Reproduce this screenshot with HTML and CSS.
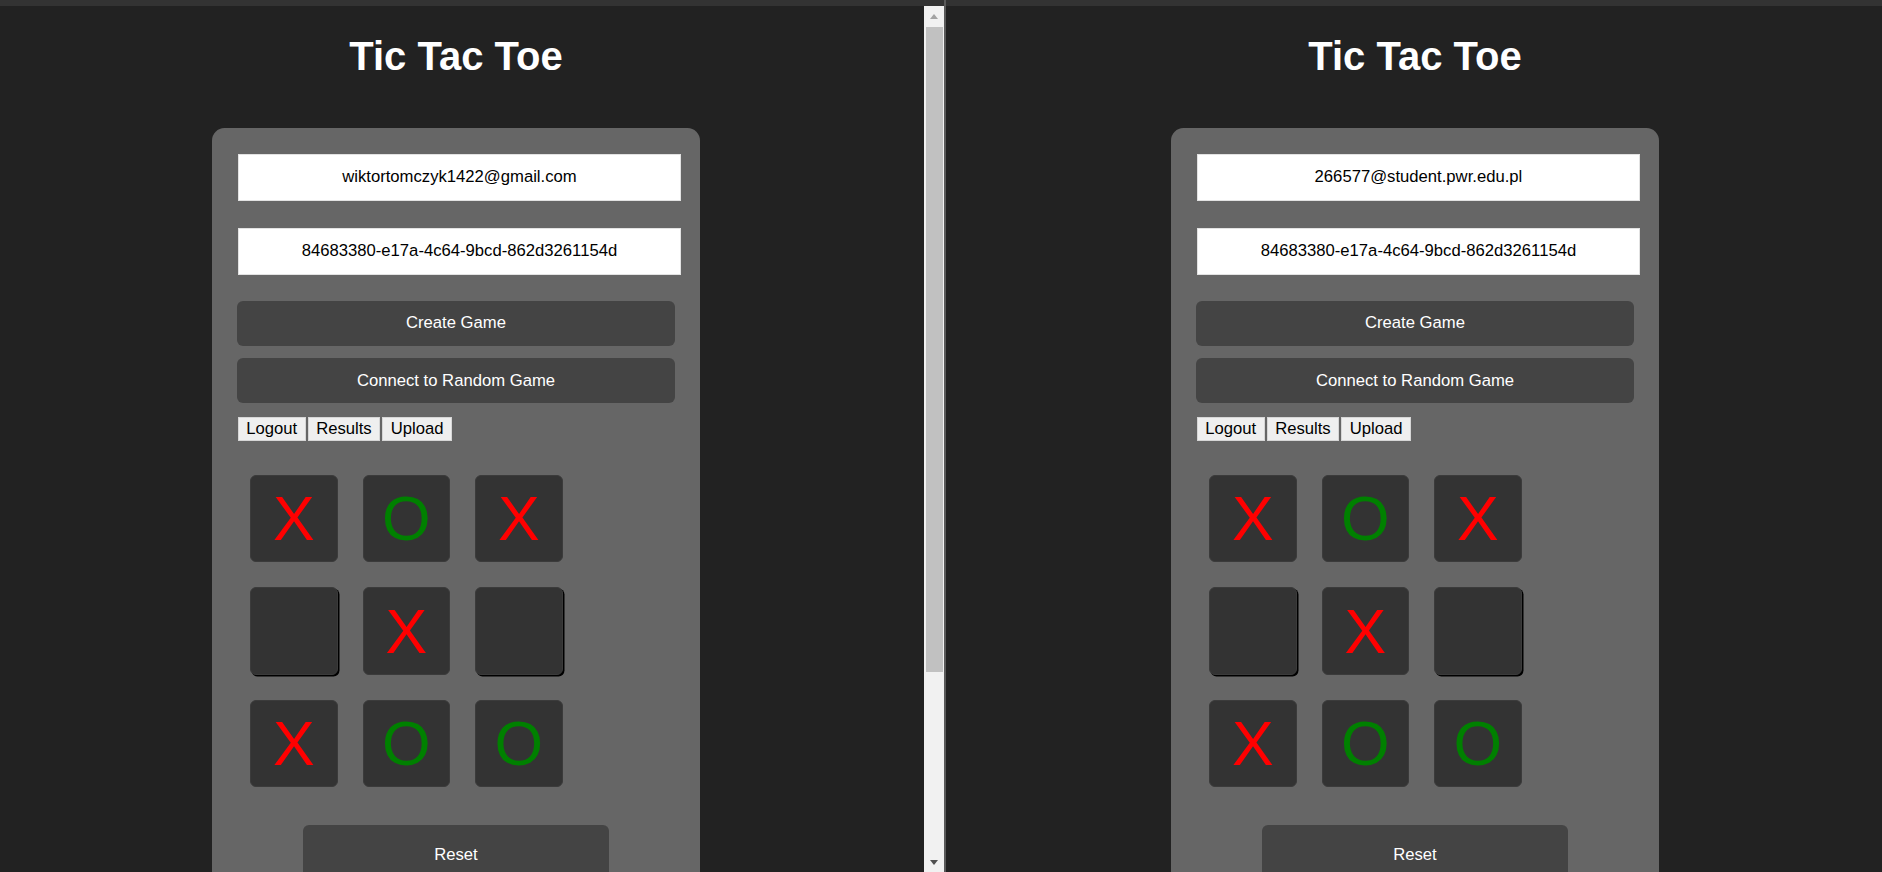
FILE: index.html
```html
<!DOCTYPE html>
<html lang="en">
<head>
<meta charset="utf-8">
<title>Tic Tac Toe</title>
<link rel="stylesheet" href="styles.css">
</head>
<body>
<div class="screen">
  <div class="pane pane-left">
    <div class="topstrip"></div>
    <div class="page">
      <h1 class="title">Tic Tac Toe</h1>
      <div class="card">
        <input class="field" type="text" value="wiktortomczyk1422@gmail.com">
        <input class="field field-second" type="text" value="84683380-e17a-4c64-9bcd-862d3261154d">
        <button class="wide-btn">Create Game</button>
        <button class="wide-btn wide-btn-second">Connect to Random Game</button>
        <div class="small-row">
          <button class="small-btn">Logout</button>
          <button class="small-btn">Results</button>
          <button class="small-btn">Upload</button>
        </div>
        <div class="board">
          <div class="cell x">X</div>
          <div class="cell o">O</div>
          <div class="cell x">X</div>
          <div class="cell empty"></div>
          <div class="cell x">X</div>
          <div class="cell empty"></div>
          <div class="cell x">X</div>
          <div class="cell o">O</div>
          <div class="cell o">O</div>
        </div>
        <button class="reset-btn">Reset</button>
      </div>
    </div>
  </div>
  <div class="scrollbar">
    <div class="topstrip"></div>
    <div class="sb-btn"><span class="arrow-up"></span></div>
    <div class="sb-thumb"></div>
    <div class="sb-rest"></div>
    <div class="sb-btn sb-btn-down"><span class="arrow-down"></span></div>
  </div>
  <div class="divider"></div>
  <div class="pane pane-right">
    <div class="topstrip"></div>
    <div class="page">
      <h1 class="title">Tic Tac Toe</h1>
      <div class="card">
        <input class="field" type="text" value="266577@student.pwr.edu.pl">
        <input class="field field-second" type="text" value="84683380-e17a-4c64-9bcd-862d3261154d">
        <button class="wide-btn">Create Game</button>
        <button class="wide-btn wide-btn-second">Connect to Random Game</button>
        <div class="small-row">
          <button class="small-btn">Logout</button>
          <button class="small-btn">Results</button>
          <button class="small-btn">Upload</button>
        </div>
        <div class="board">
          <div class="cell x">X</div>
          <div class="cell o">O</div>
          <div class="cell x">X</div>
          <div class="cell empty"></div>
          <div class="cell x">X</div>
          <div class="cell empty"></div>
          <div class="cell x">X</div>
          <div class="cell o">O</div>
          <div class="cell o">O</div>
        </div>
        <button class="reset-btn">Reset</button>
      </div>
    </div>
  </div>
</div>
</body>
</html>
```
FILE: styles.css
```css
* {
  box-sizing: border-box;
}

html, body {
  margin: 0;
  padding: 0;
  width: 1882px;
  height: 872px;
  overflow: hidden;
  background: #222222;
  font-family: "Liberation Sans", Arial, sans-serif;
}

.screen {
  display: flex;
  width: 1882px;
  height: 872px;
}

.topstrip {
  height: 6px;
  background: #333333;
  flex: none;
}

.pane {
  height: 872px;
  overflow: hidden;
  background: #222222;
  display: flex;
  flex-direction: column;
}

.pane-left {
  width: 924px;
}

.pane-left .page {
  margin-left: -13px;
}

.pane-right {
  width: 936px;
}

.page {
  width: 938px;
  flex: none;
  text-align: center;
}

.title {
  margin: 27px 0 49px;
  font-size: 40px;
  line-height: 46px;
  font-weight: bold;
  color: #ffffff;
}

.card {
  width: 488px;
  margin: 0 auto;
  padding: 25.7px 25px 25px;
  background: #666666;
  border-radius: 12.5px;
  text-align: left;
}

.field {
  display: block;
  width: 443.5px;
  height: 47.3px;
  margin: 0 0 26.7px 0.7px;
  padding: 0;
  border: 1px solid #e2e2e2;
  background: #ffffff;
  color: #000000;
  font-family: "Liberation Sans", Arial, sans-serif;
  font-size: 16.67px;
  text-align: center;
  outline: none;
}

.field-second {
  margin-bottom: 26px;
}

.wide-btn {
  display: block;
  width: 438px;
  height: 44.7px;
  margin: 0 0 12.5px;
  padding: 0;
  border: none;
  border-radius: 6px;
  background: #444444;
  color: #ffffff;
  font-family: "Liberation Sans", Arial, sans-serif;
  font-size: 16.67px;
}

.wide-btn-second {
  margin-bottom: 14px;
}

.small-row {
  display: flex;
  gap: 2px;
  height: 24.3px;
  margin: 0 0 33.8px 0.7px;
}

.small-btn {
  height: 24.3px;
  padding: 0 7.5px;
  border: 1px solid #d6d6d6;
  background: #efefef;
  color: #000000;
  font-family: "Liberation Sans", Arial, sans-serif;
  font-size: 16.67px;
  line-height: 20px;
}

.board {
  display: grid;
  grid-template-columns: repeat(3, 87.5px);
  grid-auto-rows: 87.5px;
  gap: 25px;
  margin-left: 13px;
}

.cell {
  display: flex;
  align-items: center;
  justify-content: center;
  background: #333333;
  border: 1px solid #3b3b3b;
  border-radius: 6px;
  font-family: "Liberation Sans", Arial, sans-serif;
  font-size: 62.5px;
  line-height: 1;
}

.cell.x {
  color: #ff0000;
}

.cell.o {
  color: #008000;
}

.cell.empty {
  box-shadow: 1.5px 1.5px 0.5px #000000;
}

.reset-btn {
  display: block;
  width: 305.7px;
  height: 61px;
  margin: 37.5px auto 0;
  padding: 0;
  border: none;
  border-radius: 6px;
  background: #444444;
  color: #ffffff;
  font-family: "Liberation Sans", Arial, sans-serif;
  font-size: 16.67px;
}

.scrollbar {
  width: 20px;
  height: 872px;
  display: flex;
  flex-direction: column;
  background: #f1f1f1;
}

.sb-btn {
  height: 21px;
  flex: none;
  display: flex;
  align-items: center;
  justify-content: center;
}

.sb-btn-down {
  height: 19px;
  align-items: flex-start;
  padding-top: 7px;
}

.arrow-up {
  width: 0;
  height: 0;
  border-left: 4.5px solid transparent;
  border-right: 4.5px solid transparent;
  border-bottom: 5px solid #a3a3a3;
}

.arrow-down {
  width: 0;
  height: 0;
  border-left: 4.5px solid transparent;
  border-right: 4.5px solid transparent;
  border-top: 5px solid #505050;
}

.sb-thumb {
  height: 645px;
  margin: 0 1px 0 2px;
  background: #c1c1c1;
  flex: none;
}

.sb-rest {
  flex: 1;
}

.divider {
  width: 2px;
  height: 872px;
  background: #5a5a5a;
  flex: none;
}
```
